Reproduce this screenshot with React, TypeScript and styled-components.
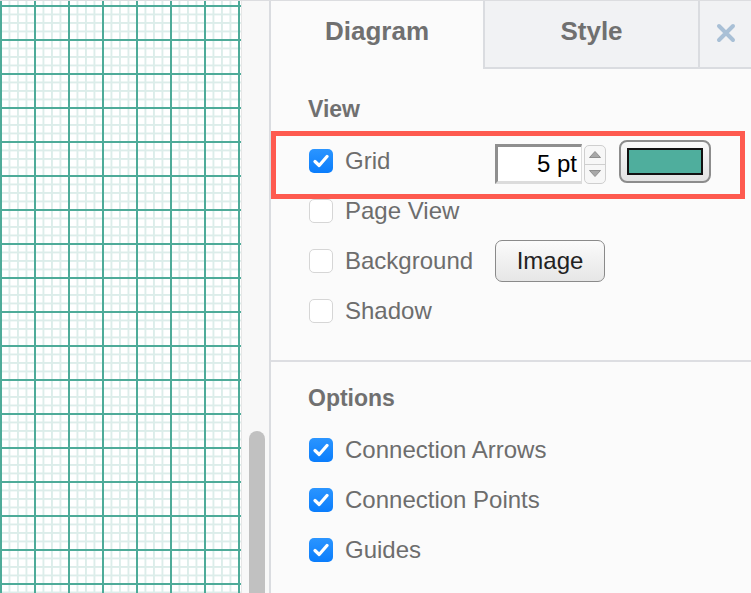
import React from 'react';
import styled, { createGlobalStyle } from 'styled-components';

const GlobalStyle = createGlobalStyle`
  html, body {
    margin: 0;
    padding: 0;
    background: #fbfbfb;
  }
  body {
    font-family: 'Liberation Sans', Arial, Helvetica, sans-serif;
  }
`;

const Page = styled.div`
  display: flex;
  width: 751px;
  height: 593px;
  overflow: hidden;
  border-top: 1px solid #dcdde0;
  box-sizing: border-box;
`;

const Canvas = styled.div`
  width: 241px;
  flex-shrink: 0;
  background-color: #ffffff;
  background-image:
    linear-gradient(to right, #4eab99 0, #4eab99 1.6px, transparent 1.6px),
    linear-gradient(to bottom, #4eab99 0, #4eab99 1.6px, transparent 1.6px),
    linear-gradient(to right, #dcedea 0, #dcedea 2px, transparent 2px),
    linear-gradient(to bottom, #dcedea 0, #dcedea 2px, transparent 2px);
  background-size: 34px 34px, 34px 34px, 8.5px 8.5px, 8.5px 8.5px;
  background-position: 0 4px, 0 4px, 0 4px, 0 4px;
`;

const ScrollStrip = styled.div`
  width: 20px;
  flex-shrink: 0;
  background: #f8f8f8;
  border-left: 1px solid #e6e6e6;
  border-right: 2px solid #dadce0;
  padding: 430px 0 0 7px;
`;

const ScrollThumb = styled.div`
  width: 16px;
  height: 200px;
  border-radius: 8px;
  background: #c1c1c1;
`;

const Panel = styled.div`
  flex: 1;
  display: flex;
  flex-direction: column;
  background: #fbfbfb;
`;

const Tabs = styled.div`
  display: flex;
  height: 68px;
  flex-shrink: 0;
`;

const Tab = styled.div<{ $active?: boolean; $width: number }>`
  width: ${(p) => p.$width}px;
  box-sizing: border-box;
  display: flex;
  justify-content: center;
  padding-top: 15px;
  font-size: 26px;
  font-weight: 700;
  color: #707070;
  background: ${(p) => (p.$active ? '#fbfbfb' : '#f1f2f4')};
  border-left: ${(p) => (p.$active ? 'none' : '2px solid #dadce0')};
  border-bottom: ${(p) => (p.$active ? 'none' : '2px solid #dadce0')};
`;

const CloseTab = styled(Tab)`
  flex: 1;
  padding-top: 0;
  padding-bottom: 2px;
  align-items: center;
`;

const Section = styled.div<{ $top: number }>`
  padding: ${(p) => p.$top}px 0 0 0;
`;

const SectionTitle = styled.div`
  font-size: 23px;
  font-weight: 700;
  color: #707070;
  line-height: 26px;
  padding-left: 37px;
  margin-bottom: 14px;
`;

const Divider = styled.div`
  height: 2px;
  background: #dddee2;
  margin-top: 24px;
`;

const Row = styled.div<{ $highlight?: boolean }>`
  position: relative;
  display: flex;
  align-items: center;
  height: 50px;
  padding-left: 38px;

  ${(p) =>
    p.$highlight &&
    `
    &::after {
      content: '';
      position: absolute;
      left: 0;
      right: 6px;
      top: -5px;
      bottom: -13px;
      border: 5px solid #fe5a4f;
      pointer-events: none;
    }
  `}
`;

const Check = styled.span<{ $checked?: boolean }>`
  width: 24px;
  height: 24px;
  flex-shrink: 0;
  box-sizing: border-box;
  border-radius: 5px;
  display: flex;
  align-items: center;
  justify-content: center;
  background: ${(p) =>
    p.$checked ? 'linear-gradient(#2b95ff, #0a7dfc)' : '#ffffff'};
  border: ${(p) => (p.$checked ? 'none' : '1px solid #d6d6d6')};
`;

const Label = styled.span<{ $width?: number }>`
  font-size: 24px;
  color: #6d6d6d;
  margin-left: 12px;
  width: ${(p) => (p.$width ? `${p.$width}px` : 'auto')};
  white-space: nowrap;
`;

const NumberBox = styled.div`
  width: 87px;
  height: 40px;
  margin-top: 6px;
  box-sizing: border-box;
  background: #ffffff;
  border-top: 3px solid #8f8f8f;
  border-left: 3px solid #8f8f8f;
  border-bottom: 3px solid #dcdcdc;
  border-right: 1px solid #dcdcdc;
  display: flex;
  align-items: center;
  justify-content: flex-end;
  padding-right: 4px;
  font-size: 24px;
  color: #000;
`;

const Spinner = styled.div`
  width: 22px;
  height: 39px;
  margin: 6px 0 0 2px;
  box-sizing: border-box;
  border: 1.5px solid #cfcfcf;
  border-radius: 5px;
  display: flex;
  flex-direction: column;
  background: #f7f7f7;
`;

const SpinHalf = styled.div<{ $bottom?: boolean }>`
  flex: 1;
  display: flex;
  align-items: center;
  justify-content: center;
  border-top: ${(p) => (p.$bottom ? '1.5px solid #cfcfcf' : 'none')};
`;

const ColorButton = styled.div`
  width: 92px;
  height: 43px;
  margin-left: 13px;
  margin-top: 1px;
  box-sizing: border-box;
  border: 2px solid #8c8c8c;
  border-radius: 8px;
  background: linear-gradient(#f8f8f8, #e2e2e2);
  display: flex;
  align-items: center;
  justify-content: center;
`;

const Swatch = styled.div<{ $color: string }>`
  width: 76px;
  height: 27px;
  box-sizing: border-box;
  border: 2px solid #111;
  background: ${(p) => p.$color};
`;

const PlainButton = styled.div`
  width: 110px;
  height: 42px;
  box-sizing: border-box;
  border: 1.5px solid #8a8a8a;
  border-radius: 7px;
  background: linear-gradient(#fbfbfb, #e6e6e6);
  display: flex;
  align-items: center;
  justify-content: center;
  font-size: 24px;
  color: #222;
`;

function CheckMark() {
  return (
    <svg width="16" height="14" viewBox="0 0 16 14">
      <path
        d="M2 7.5 L6.2 11.5 L14 2.5"
        fill="none"
        stroke="#fff"
        strokeWidth="3.2"
        strokeLinecap="round"
        strokeLinejoin="round"
      />
    </svg>
  );
}

function Arrow({ down }: { down?: boolean }) {
  return (
    <svg width="14" height="9" viewBox="0 0 14 9">
      <path
        d={down ? 'M1.5 1.5 L12.5 1.5 L7 7.5 Z' : 'M1.5 7.5 L12.5 7.5 L7 1.5 Z'}
        fill="#a8a8a8"
        stroke="#8e8e8e"
        strokeWidth="1"
        strokeLinejoin="round"
      />
    </svg>
  );
}

function Option({
  label,
  checked,
  width,
  highlight,
  children,
}: {
  label: string;
  checked?: boolean;
  width?: number;
  highlight?: boolean;
  children?: React.ReactNode;
}) {
  return (
    <Row $highlight={highlight}>
      <Check $checked={checked}>{checked && <CheckMark />}</Check>
      <Label $width={width}>{label}</Label>
      {children}
    </Row>
  );
}

export default function App() {
  return (
    <>
      <GlobalStyle />
      <Page>
        <Canvas />
        <ScrollStrip>
          <ScrollThumb />
        </ScrollStrip>
        <Panel>
          <Tabs>
            <Tab $active $width={212}>
              Diagram
            </Tab>
            <Tab $width={215}>Style</Tab>
            <CloseTab $width={0}>
              <svg width="20" height="20" viewBox="0 0 20 20">
                <path
                  d="M3 3 L17 17 M17 3 L3 17"
                  stroke="#a9c0d6"
                  strokeWidth="4"
                  strokeLinecap="round"
                />
              </svg>
            </CloseTab>
          </Tabs>

          <Section $top={27}>
            <SectionTitle>View</SectionTitle>
            <Option label="Grid" checked width={150} highlight>
              <NumberBox>5 pt</NumberBox>
              <Spinner>
                <SpinHalf>
                  <Arrow />
                </SpinHalf>
                <SpinHalf $bottom>
                  <Arrow down />
                </SpinHalf>
              </Spinner>
              <ColorButton>
                <Swatch $color="#4fae9d" />
              </ColorButton>
            </Option>
            <Option label="Page View" />
            <Option label="Background" width={150}>
              <PlainButton>Image</PlainButton>
            </Option>
            <Option label="Shadow" />
            <Divider />
          </Section>

          <Section $top={23}>
            <SectionTitle>Options</SectionTitle>
            <Option label="Connection Arrows" checked />
            <Option label="Connection Points" checked />
            <Option label="Guides" checked />
          </Section>
        </Panel>
      </Page>
    </>
  );
}
